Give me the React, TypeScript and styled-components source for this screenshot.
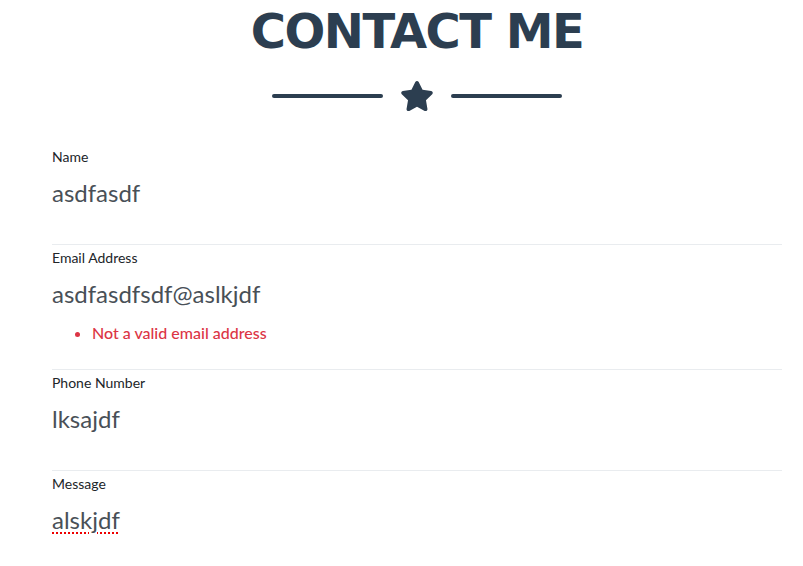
import React from 'react'
import styled, { createGlobalStyle } from 'styled-components'
import { FaStar } from 'react-icons/fa'

const GlobalStyle = createGlobalStyle`
  html, body {
    margin: 0;
    padding: 0;
    background: #fff;
  }
  body {
    font-family: Lato, "Liberation Sans", sans-serif;
    color: #212529;
  }
`

const Page = styled.section`
  width: 730px;
  padding-left: 52px;
`

const Heading = styled.h2`
  margin: 3px 0 0;
  font-family: "DejaVu Sans", "Open Sans", sans-serif;
  font-weight: 700;
  font-size: 48px;
  line-height: 56px;
  letter-spacing: -1.5px;
  text-align: center;
  text-transform: uppercase;
  color: #2c3e50;
`

const Divider = styled.div`
  margin-top: 21px;
  height: 32px;
  display: flex;
  align-items: center;
  justify-content: center;
  gap: 17px;
  color: #2c3e50;
`

const DividerLine = styled.span`
  width: 111px;
  height: 4px;
  border-radius: 2px;
  background: #2c3e50;
`

const Form = styled.form`
  margin-top: 32px;
`

const Group = styled.div<{ $last?: boolean }>`
  padding: 2px 0 24px;
  border-bottom: ${({ $last }) => ($last ? 'none' : '1px solid #e9ecef')};
`

const Label = styled.label`
  display: block;
  font-size: 14px;
  line-height: 21px;
  color: #212529;
`

const Value = styled.div<{ $misspelled?: boolean }>`
  margin: 8px 0 9px;
  font-size: 24px;
  line-height: 36px;
  color: #495057;

  span {
    text-decoration: ${({ $misspelled }) => ($misspelled ? 'underline dotted #e00' : 'none')};
    text-decoration-thickness: 2px;
    text-underline-offset: 3px;
  }
`

const Errors = styled.ul`
  margin: 0;
  padding-left: 40px;
  font-size: 16px;
  line-height: 24px;
  font-weight: 500;
  color: #dc3545;
`

type Field = {
  label: string
  value: string
  error?: string
  misspelled?: boolean
}

const fields: Field[] = [
  { label: 'Name', value: 'asdfasdf' },
  { label: 'Email Address', value: 'asdfasdfsdf@aslkjdf', error: 'Not a valid email address' },
  { label: 'Phone Number', value: 'lksajdf' },
  { label: 'Message', value: 'alskjdf', misspelled: true },
]

const App = () => {
  return (
    <Page>
      <GlobalStyle />
      <Heading>Contact Me</Heading>
      <Divider>
        <DividerLine />
        <FaStar size={34} />
        <DividerLine />
      </Divider>
      <Form>
        {fields.map((f, i) => (
          <Group key={f.label} $last={i === fields.length - 1}>
            <Label>{f.label}</Label>
            <Value $misspelled={f.misspelled}>
              <span>{f.value}</span>
            </Value>
            {f.error && (
              <Errors>
                <li>{f.error}</li>
              </Errors>
            )}
          </Group>
        ))}
      </Form>
    </Page>
  )
}

export default App
